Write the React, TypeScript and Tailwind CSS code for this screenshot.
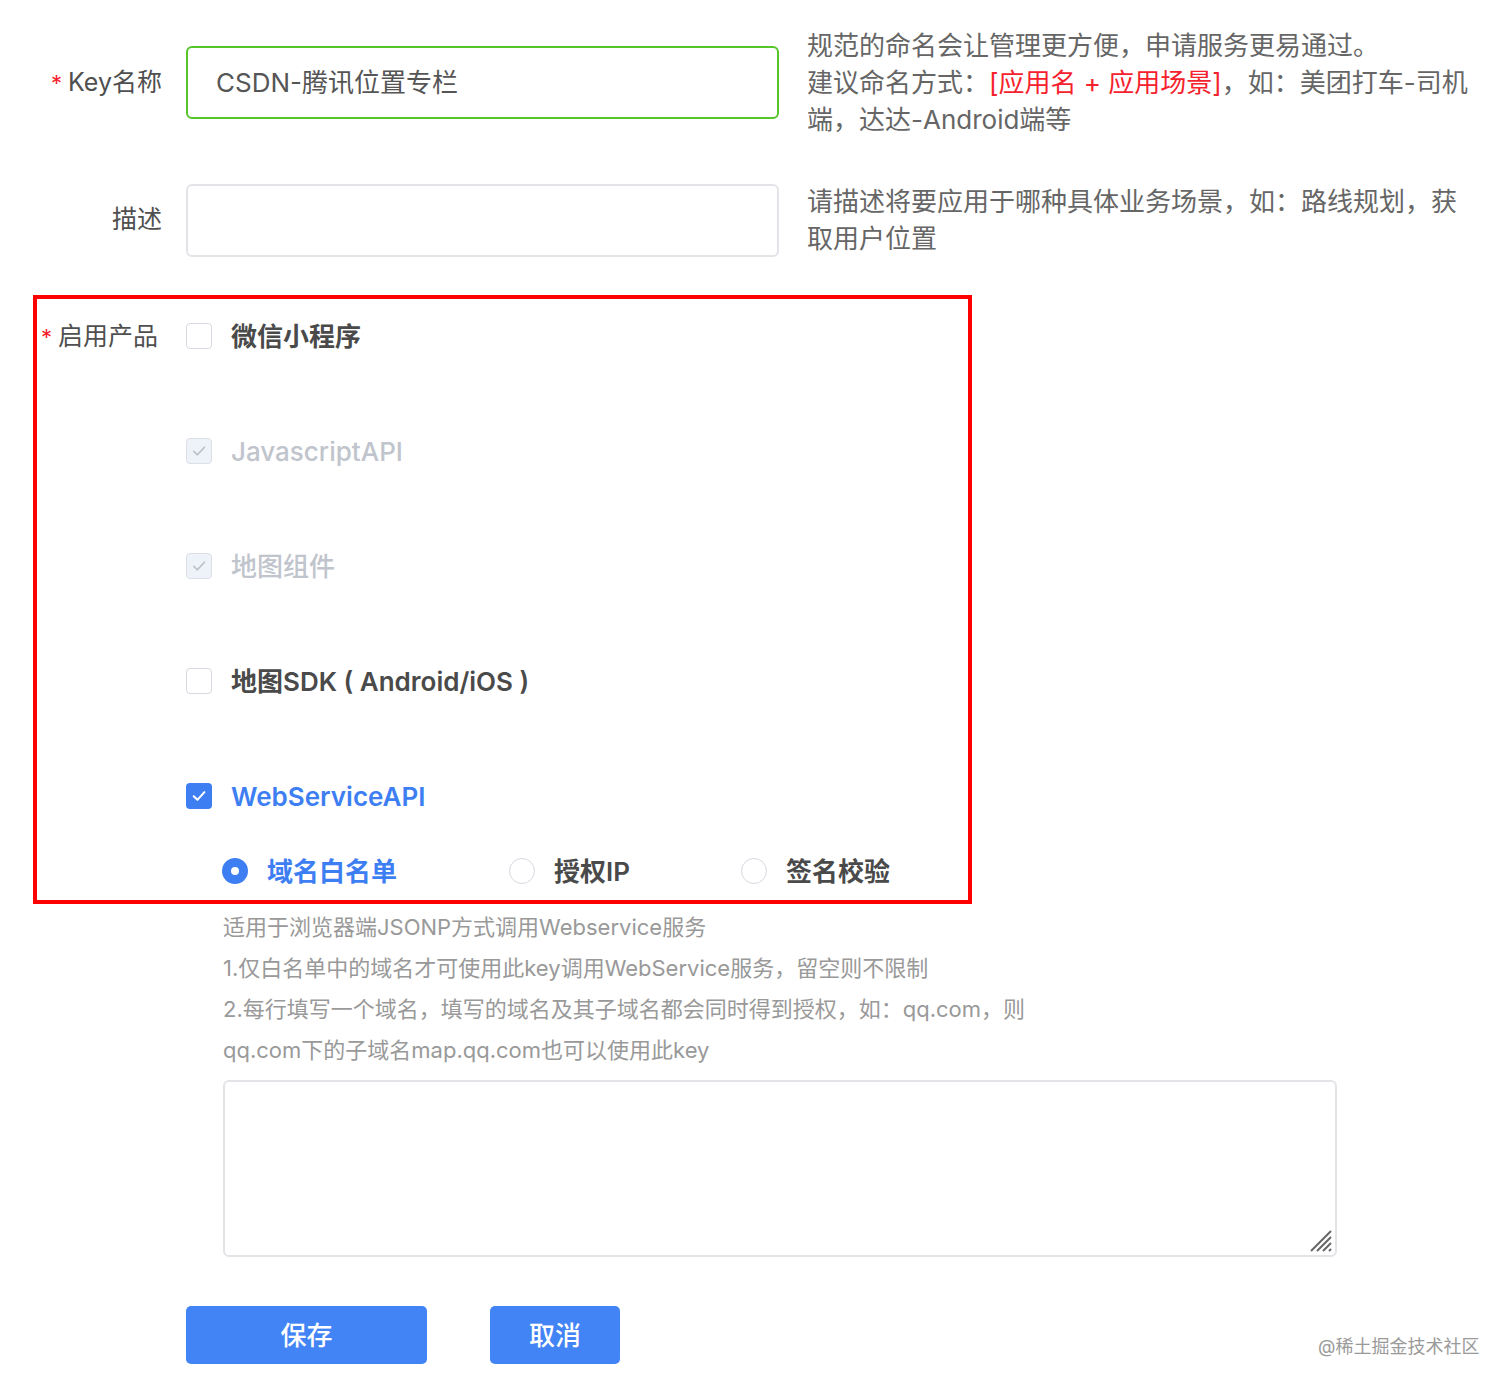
import React from 'react';

const font = { fontFamily: 'Inter, "Noto Sans CJK SC", sans-serif' };

function Check({ state }: { state: 'off' | 'disabled' | 'on' }) {
  if (state === 'on') {
    return (
      <span className="flex h-[26px] w-[26px] shrink-0 items-center justify-center rounded-[4px] bg-[#3e7ef3]">
        <svg width="18" height="18" viewBox="0 0 16 16" fill="none">
          <path d="M3.3 8.2 6.6 11.4 12.8 4.6" stroke="#fff" strokeWidth="1.8" strokeLinecap="round" strokeLinejoin="round" />
        </svg>
      </span>
    );
  }
  if (state === 'disabled') {
    return (
      <span className="flex h-[26px] w-[26px] shrink-0 items-center justify-center rounded-[4px] border border-[#dcdfe6] bg-[#eef2f9]">
        <svg width="18" height="18" viewBox="0 0 16 16" fill="none">
          <path d="M3.3 8.2 6.6 11.4 12.8 4.6" stroke="#b9bec8" strokeWidth="1.4" strokeLinecap="round" strokeLinejoin="round" />
        </svg>
      </span>
    );
  }
  return <span className="h-[26px] w-[26px] shrink-0 rounded-[4px] border border-[#d6d9df] bg-white" />;
}

function Radio({ on }: { on?: boolean }) {
  if (on) {
    return (
      <span className="flex h-[26px] w-[26px] shrink-0 items-center justify-center rounded-full bg-[#3e7ef3]">
        <span className="h-[8px] w-[8px] rounded-full bg-white" />
      </span>
    );
  }
  return <span className="h-[26px] w-[26px] shrink-0 rounded-full border border-[#d6d9df] bg-white" />;
}

const products: { label: string; state: 'off' | 'disabled' | 'on' }[] = [
  { label: '微信小程序', state: 'off' },
  { label: 'JavascriptAPI', state: 'disabled' },
  { label: '地图组件', state: 'disabled' },
  { label: '地图SDK ( Android/iOS )', state: 'off' },
  { label: 'WebServiceAPI', state: 'on' },
];

export default function App() {
  return (
    <div className="relative min-h-[1391px] w-[1512px] bg-white pt-[27px]" style={font}>
      {/* Key名称 */}
      <div className="flex items-center">
        <div className="w-[162px] text-right text-[25px] text-[#4f4f4f]">
          <span className="mr-[6px] text-[22px] text-[#f5222d]">*</span>Key名称
        </div>
        <div className="ml-[24px] flex h-[73px] w-[593px] items-center rounded-[6px] border-2 border-[#56c52a] px-[28px] text-[26px] text-[#555]">
          CSDN-腾讯位置专栏
        </div>
        <div className="ml-[28px] text-[26px] leading-[37px] whitespace-nowrap text-[#666]">
          <div>规范的命名会让管理更方便，申请服务更易通过。</div>
          <div>
            建议命名方式：<span className="text-[#f5222d]">[应用名 + 应用场景]</span>，如：美团打车-司机
          </div>
          <div>端，达达-Android端等</div>
        </div>
      </div>

      {/* 描述 */}
      <div className="mt-[45px] flex items-center">
        <div className="w-[162px] text-right text-[25px] text-[#4f4f4f]">描述</div>
        <div className="ml-[24px] h-[73px] w-[593px] rounded-[6px] border-2 border-[#e2e4e8]" />
        <div className="ml-[28px] text-[26px] leading-[37px] whitespace-nowrap text-[#666]">
          <div>请描述将要应用于哪种具体业务场景，如：路线规划，获</div>
          <div>取用户位置</div>
        </div>
      </div>

      {/* 启用产品 */}
      <div className="mt-[38px] ml-[33px] flex h-[609px] w-[939px] border-[4px] border-[#ff0000] pt-[22px]">
        <div className="h-[30px] w-[125px] pl-[4px] text-[25px] leading-[30px] text-[#4f4f4f]">
          <span className="mr-[6px] text-[22px] text-[#f5222d]">*</span>启用产品
        </div>
        <div className="ml-[24px] flex flex-col">
          {products.map((p, i) => (
            <div key={p.label} className={`flex h-[30px] items-center gap-[19px] ${i > 0 ? 'mt-[85px]' : ''}`}>
              <Check state={p.state} />
              <span
                className={`text-[26px] ${
                  p.state === 'disabled'
                    ? 'font-medium text-[#c0c4cc]'
                    : p.state === 'on'
                      ? 'font-semibold text-[#3e7ef3]'
                      : 'font-semibold text-[#4a4a4a]'
                }`}
              >
                {p.label}
              </span>
            </div>
          ))}
          <div className="mt-[45px] ml-[36px] flex h-[30px] items-center">
            <div className="flex w-[287px] items-center gap-[19px]">
              <Radio on />
              <span className="text-[26px] font-semibold text-[#3e7ef3]">域名白名单</span>
            </div>
            <div className="flex w-[232px] items-center gap-[19px]">
              <Radio />
              <span className="text-[26px] font-semibold text-[#4a4a4a]">授权IP</span>
            </div>
            <div className="flex items-center gap-[19px]">
              <Radio />
              <span className="text-[26px] font-semibold text-[#4a4a4a]">签名校验</span>
            </div>
          </div>
        </div>
      </div>

      {/* 说明 */}
      <div className="mt-[3px] ml-[223px] text-[22px] leading-[41px] whitespace-nowrap text-[#999]">
        <div>适用于浏览器端JSONP方式调用Webservice服务</div>
        <div>1.仅白名单中的域名才可使用此key调用WebService服务，留空则不限制</div>
        <div>2.每行填写一个域名，填写的域名及其子域名都会同时得到授权，如：qq.com，则</div>
        <div>qq.com下的子域名map.qq.com也可以使用此key</div>
      </div>

      <div className="relative mt-[9px] ml-[223px] h-[177px] w-[1114px]">
        <textarea className="h-full w-full resize-none rounded-[6px] border-2 border-[#e2e4e8] outline-none" />
        <svg className="absolute right-[4px] bottom-[4px]" width="24" height="24" viewBox="0 0 24 24">
          <path d="M2 22 22 2 M8 22 22 8 M14 22 22 14 M20 22 22 20" stroke="#666" strokeWidth="2" />
        </svg>
      </div>

      {/* 按钮 */}
      <div className="mt-[49px] ml-[186px] flex gap-[63px]">
        <button className="h-[58px] w-[241px] rounded-[5px] bg-[#4284f5] text-[26px] font-medium text-white">保存</button>
        <button className="h-[58px] w-[130px] rounded-[5px] bg-[#4284f5] text-[26px] font-medium text-white">取消</button>
      </div>

      <div className="absolute top-[1333px] left-[1318px] text-[18px] text-[#9a9a9a]">@稀土掘金技术社区</div>
    </div>
  );
}
